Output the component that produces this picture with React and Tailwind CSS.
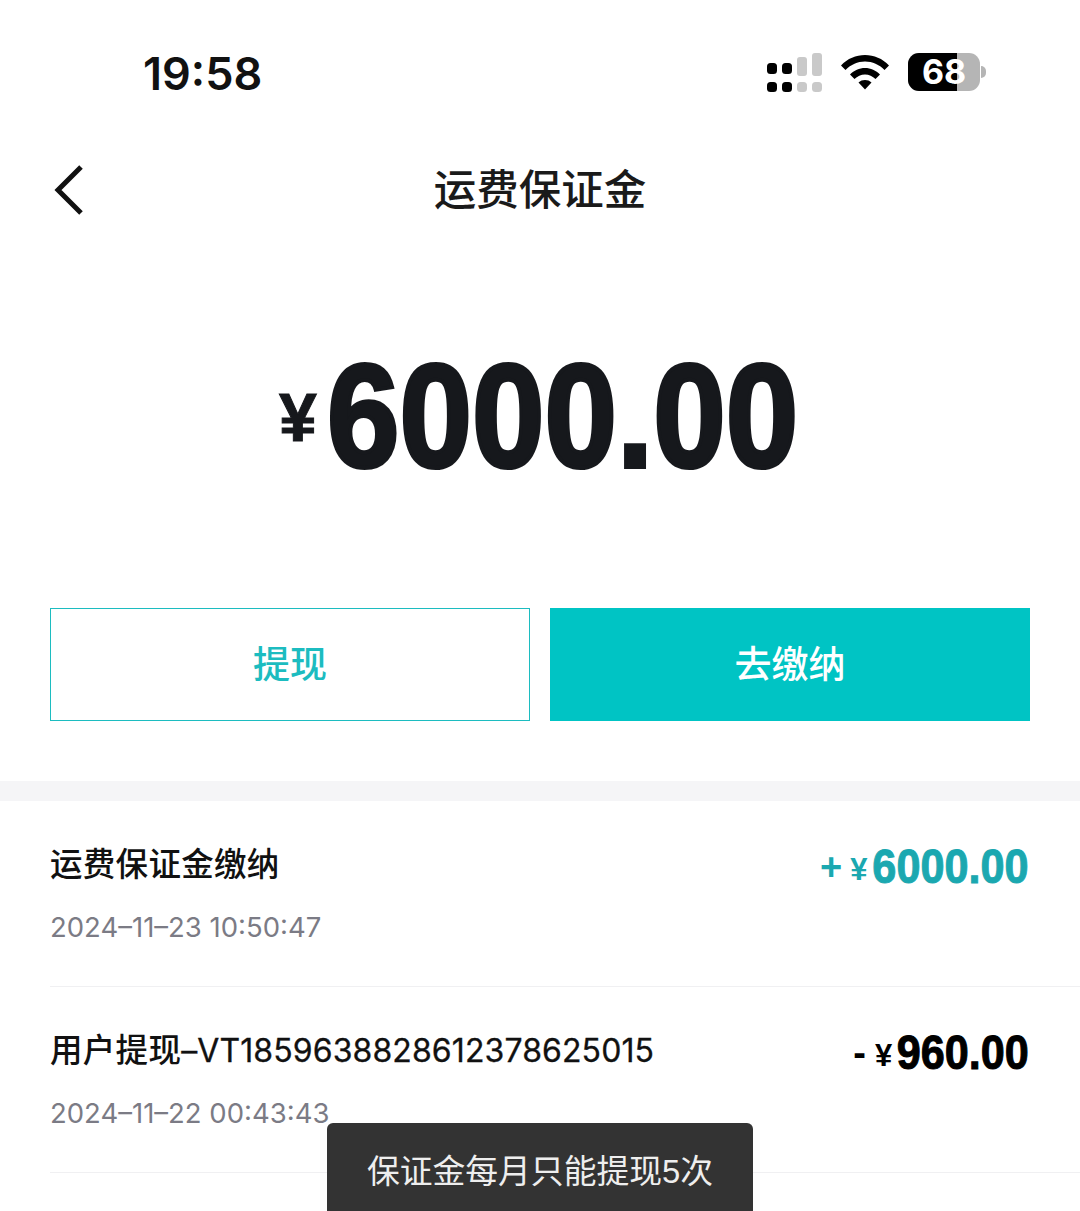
import React from 'react';

const SANS = { fontFamily: '"Liberation Sans", "Noto Sans CJK SC", sans-serif' };
const INTER = { fontFamily: 'Inter, sans-serif' };

const SignalIcon = () => (
  <svg width="56" height="40" viewBox="0 0 56 40" className="block">
    <rect x="0" y="10" width="10" height="11" rx="3.500" fill="#000" />
    <rect x="15" y="10" width="10" height="11" rx="3.500" fill="#000" />
    <rect x="0" y="29" width="10" height="10" rx="3.500" fill="#000" />
    <rect x="15" y="29" width="10" height="10" rx="3.500" fill="#000" />
    <rect x="30" y="4" width="10" height="19" rx="3" fill="#c9c9c9" />
    <rect x="45" y="0" width="10" height="23" rx="3" fill="#c9c9c9" />
    <rect x="30" y="29" width="10" height="10" rx="3.500" fill="#c9c9c9" />
    <rect x="45" y="29" width="10" height="10" rx="3.500" fill="#c9c9c9" />
  </svg>
);

const WifiIcon = () => (
  <svg width="48" height="36" viewBox="0 0 48 36" className="block">
    <path d="M0 11.500C6.500 4.500 15 1 24 1s17.500 3.500 24 10.500l-4.500 4.500C38 10.500 31.500 7.500 24 7.500S10 10.500 4.500 16z" fill="#000" />
    <path d="M9 20.500C13 16.500 18.300 14 24 14s11 2.500 15 6.500l-4.500 4.500C31.700 22.300 28 20.500 24 20.500S16.300 22.300 13.500 25z" fill="#000" />
    <path d="M17.500 28.500C19.300 26.800 21.500 26 24 26s4.700.8 6.500 2.500L24 35.500z" fill="#000" />
  </svg>
);

const Battery = () => (
  <div className="flex items-center">
    <div className="relative flex h-[38px] w-[72px] rounded-[11px] bg-[#b5b5b5]">
      <div className="w-[49px] rounded-l-[11px] bg-black" />
      <span
        className="absolute inset-0 flex items-center justify-center text-[34px] leading-none font-bold text-white"
        style={INTER}
      >
        68
      </span>
    </div>
    <div className="ml-[1px] h-[12px] w-[5px] rounded-r-full bg-[#b5b5b5]" />
  </div>
);

const Amount = ({ sign, signGap, yenGap, value, colorClass }) => (
  <div className={`flex items-baseline ${colorClass}`} style={SANS}>
    <span className={`${signGap} -translate-y-[3px] text-[38px] leading-none font-bold`}>{sign}</span>
    <span className={`${yenGap} -translate-y-[3px] text-[31px] leading-none font-bold`}>¥</span>
    <span className="-ml-[17px] origin-right scale-x-[0.9] text-[48px] leading-none font-bold whitespace-nowrap [-webkit-text-stroke:1px_currentColor]">
      {value}
    </span>
  </div>
);

const Row = ({ title, code, date, sign, signGap, yenGap, value, colorClass }) => (
  <div className="ml-[50px] flex h-[186px] justify-between border-b border-[#f0f0f2] pr-[51px]">
    <div>
      <div className="mt-[44px] flex items-baseline text-[32.500px] leading-[40px] font-medium tracking-[0.3px] text-[#111]">
        <span>{title}</span>
        {code && (
          <span className="text-[32px] font-normal tracking-[0.1px] [-webkit-text-stroke:0.3px_#111]" style={INTER}>
            {code}
          </span>
        )}
      </div>
      <div className="mt-[22px] text-[27.500px] leading-[40px] text-[#7b7b85]" style={INTER}>
        {date}
      </div>
    </div>
    <div className="mt-[42px]">
      <Amount sign={sign} signGap={signGap} yenGap={yenGap} value={value} colorClass={colorClass} />
    </div>
  </div>
);

export default function App() {
  return (
    <div className="relative h-[1211px] w-[1080px] overflow-hidden bg-white" style={SANS}>
      {/* Status bar */}
      <div className="flex h-[146px] items-start justify-between pt-[44px] pr-[94px] pl-[143px]">
        <span className="text-[45px] leading-[60px] font-semibold text-[#111]" style={INTER}>
          19:58
        </span>
        <div className="mt-[9px] flex items-start">
          <div className="mr-[18px]"><SignalIcon /></div>
          <div className="mt-[1px] mr-[19px]"><WifiIcon /></div>
          <Battery />
        </div>
      </div>

      {/* Nav */}
      <div className="relative flex h-[88px] items-center justify-center">
        <svg width="30" height="50" viewBox="0 0 30 50" className="absolute top-[19px] left-[54px]">
          <path d="M27 2 4 25l23 23" fill="none" stroke="#111" strokeWidth="5" />
        </svg>
        <h1 className="mt-[3px] text-[42.500px] leading-none font-medium text-[#1a1a1a]">运费保证金</h1>
      </div>

      {/* Balance */}
      <div className="mt-[109px] flex h-[148px] items-baseline text-[#16181c]">
        <span className="ml-[279px] w-[48px] -translate-y-[26px] text-[68px] leading-none font-bold [-webkit-text-stroke:1px_#16181c]">¥</span>
        <span className="origin-left scale-x-[0.893] text-[146px] leading-[148px] font-bold whitespace-nowrap [-webkit-text-stroke:4px_#16181c]">
          6000.00
        </span>
      </div>

      {/* Actions */}
      <div className="mt-[117px] flex gap-[20px] px-[50px]">
        <button className="h-[113px] w-[480px] border border-[#1cbcc0] bg-white pt-[3px] text-[37px] font-medium text-[#1cbcc0]">
          提现
        </button>
        <button className="h-[113px] w-[480px] bg-[#00c4c4] pt-[3px] text-[37px] font-medium text-white">去缴纳</button>
      </div>

      <div className="mt-[60px] h-[20px] bg-[#f5f5f7]" />

      <Row
        title="运费保证金缴纳"
        date="2024–11–23 10:50:47"
        sign="+"
        signGap="mr-[8px]"
        yenGap="mr-[5px]"
        value="6000.00"
        colorClass="text-[#1ba8b0]"
      />
      <Row
        title="用户提现"
        code="–VT1859638828612378625015"
        date="2024–11–22 00:43:43"
        sign="-"
        signGap="mr-[9px]"
        yenGap="mr-[7px]"
        value="960.00"
        colorClass="text-black"
      />

      {/* Toast */}
      <div className="absolute top-[1123px] left-[327px] flex h-[110px] w-[426px] justify-center rounded-t-[6px] bg-[#333] pt-[29px] text-[32.800px] leading-[40px] text-[#eee]">
        保证金每月只能提现5次
      </div>
    </div>
  );
}
